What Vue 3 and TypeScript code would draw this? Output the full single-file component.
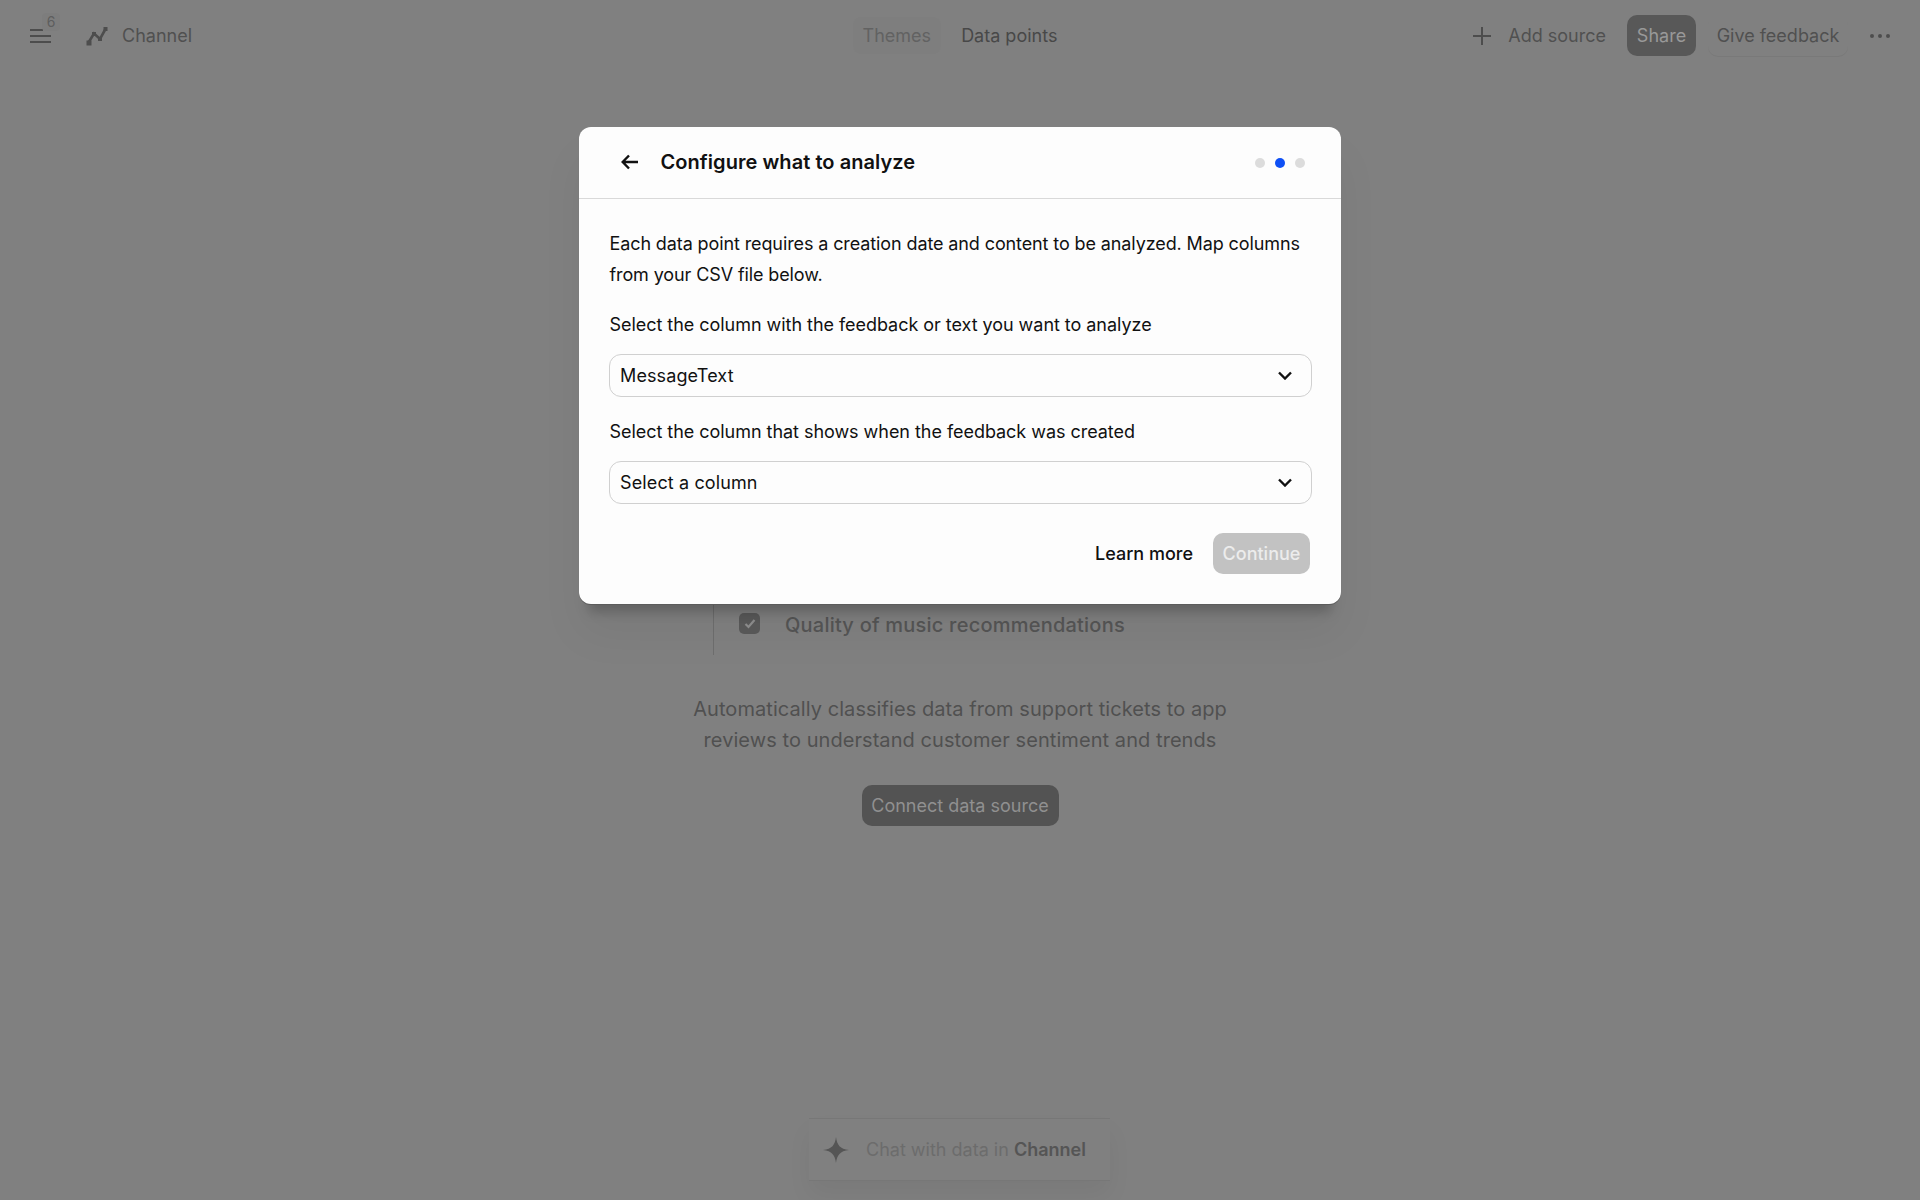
<script setup lang="ts">
const dots: string[] = ['idle', 'active', 'idle']
</script>

<template>
  <div class="page">
    <header class="topbar">
      <div class="left">
        <button class="menu">
          <svg width="21" height="16" viewBox="0 0 21 16" fill="none" stroke="#4d4d4d" stroke-width="2">
            <path d="M0 2h13M0 8h21M0 14h21" />
          </svg>
          <span class="badge">6</span>
        </button>
        <span class="channel-icon">
          <svg width="22" height="22" viewBox="0 0 22 22" fill="none" stroke="#4d4d4d" stroke-width="2.600">
            <path d="M2.500 17.500 L8 8.500 L14 14 L19.500 4" />
            <rect x="0.500" y="15.500" width="5" height="5" fill="#4d4d4d" stroke="none" />
            <rect x="6" y="7" width="4" height="4" fill="#4d4d4d" stroke="none" />
            <rect x="12" y="12" width="4" height="4" fill="#4d4d4d" stroke="none" />
            <rect x="17.500" y="2" width="4" height="4" fill="#4d4d4d" stroke="none" />
          </svg>
        </span>
        <span class="channel-name">Channel</span>
      </div>
      <nav class="tabs">
        <span class="tab current">Themes</span>
        <span class="tab">Data points</span>
      </nav>
      <div class="right">
        <span class="add">
          <svg width="18" height="18" viewBox="0 0 18 18" fill="none" stroke="#4d4d4d" stroke-width="2">
            <path d="M9 0v18M0 9h18" />
          </svg>
          Add source
        </span>
        <button class="share">Share</button>
        <button class="feedback">Give feedback</button>
        <svg class="more" width="20" height="4" viewBox="0 0 20 4" fill="#4d4d4d">
          <circle cx="2" cy="2" r="2" /><circle cx="10" cy="2" r="2" /><circle cx="18" cy="2" r="2" />
        </svg>
      </div>
    </header>

    <main class="hero">
      <div class="preview">
        <div class="row">
          <span class="check">
            <svg width="12" height="10" viewBox="0 0 12 10" fill="none" stroke="#8f8f8f" stroke-width="2.200">
              <path d="M1.500 5l3 3 6-7" />
            </svg>
          </span>
          <span class="row-text">Quality of music recommendations</span>
        </div>
      </div>
      <p class="desc">Automatically classifies data from support tickets to app<br />reviews to understand customer sentiment and trends</p>
      <button class="connect">Connect data source</button>
    </main>

    <div class="chat">
      <svg width="26" height="26" viewBox="0 0 26 26" fill="#555">
        <path d="M13 0 C14 8 17 12 26 13 C17 14 14 18 13 26 C12 18 9 14 0 13 C9 12 12 8 13 0Z" />
      </svg>
      <span class="chat-text">Chat with data in <b>Channel</b></span>
    </div>

    <div class="overlay">
      <section class="modal">
        <div class="modal-head">
          <svg class="back" width="18" height="16" viewBox="0 0 18 16" fill="none" stroke="#111" stroke-width="2.400">
            <path d="M17 8H2M8 1.500 1.700 8 8 14.500" />
          </svg>
          <h2 class="title">Configure what to analyze</h2>
          <div class="steps">
            <i v-for="(d, i) in dots" :key="i" class="step" :class="d"></i>
          </div>
        </div>
        <div class="modal-body">
          <p class="intro">Each data point requires a creation date and content to be analyzed. Map columns from your CSV file below.</p>
          <label class="label">Select the column with the feedback or text you want to analyze</label>
          <div class="select">
            <span>MessageText</span>
            <svg width="14" height="9" viewBox="0 0 14 9" fill="none" stroke="#111" stroke-width="2.400">
              <path d="M1 1.500l6 6 6-6" />
            </svg>
          </div>
          <label class="label">Select the column that shows when the feedback was created</label>
          <div class="select">
            <span>Select a column</span>
            <svg width="14" height="9" viewBox="0 0 14 9" fill="none" stroke="#111" stroke-width="2.400">
              <path d="M1 1.500l6 6 6-6" />
            </svg>
          </div>
          <div class="actions">
            <button class="learn">Learn more</button>
            <button class="continue">Continue</button>
          </div>
        </div>
      </section>
    </div>
  </div>
</template>

<style>
html, body { margin: 0; background: #808080; }
</style>

<style scoped>
.page {
  position: relative;
  height: 1200px;
  overflow: hidden;
  background: #808080;
  font-family: Inter, "Liberation Sans", sans-serif;
  font-size: 18px;
  color: #4d4d4d;
  display: flex;
  flex-direction: column;
}
button { font: inherit; border: 0; background: none; padding: 0; color: inherit; }

.topbar {
  height: 71px;
  display: grid;
  grid-template-columns: 1fr auto 1fr;
  align-items: center;
  padding: 0 30px;
}
.left, .right, .tabs { display: flex; align-items: center; }
.menu { position: relative; display: flex; width: 21px; height: 16px; margin-right: 35px; }
.badge {
  position: absolute;
  left: 12px;
  top: -15px;
  width: 18px;
  height: 18px;
  border-radius: 4px;
  background: #7d7d7d;
  color: #5e5e5e;
  font-size: 14px;
  line-height: 18px;
  text-align: center;
}
.channel-icon { display: flex; margin-right: 14px; }
.channel-name { color: #505050; }

.tabs { gap: 10px; }
.tab { padding: 8px 10px; border-radius: 8px; color: #484848; }
.tab.current { background: #7e7e7e; color: #626262; }

.right { justify-content: flex-end; }
.add { display: flex; align-items: center; gap: 17px; color: #505050; margin-right: 21px; }
.share {
  width: 69px;
  height: 41px;
  border-radius: 10px;
  background: #585858;
  color: #999;
  margin-right: 12px;
}
.feedback {
  width: 140px;
  height: 41px;
  border-radius: 10px;
  color: #505050;
  box-shadow: 0 1px 0 #797979;
  margin-right: 22px;
}

.hero { display: flex; flex-direction: column; align-items: center; }
.preview {
  width: 760px;
  height: 584px;
  display: flex;
  align-items: flex-end;
  padding-left: 133px;
  box-sizing: border-box;
}
.row {
  width: 520px;
  height: 52px;
  display: flex;
  align-items: flex-start;
  border-left: 1px solid #6e6e6e;
  box-sizing: border-box;
  padding-left: 25px;
  padding-top: 10px;
  gap: 25px;
}
.check {
  width: 21px;
  height: 21px;
  border-radius: 5px;
  background: #5a5a5a;
  display: flex;
  align-items: center;
  justify-content: center;
  flex: none;
}
.row-text { font-size: 20px; font-weight: 500; line-height: 24px; letter-spacing: .22px; color: #555; }
.desc {
  margin: 39px 0 0;
  font-size: 20px;
  line-height: 31px;
  letter-spacing: .065px;
  text-align: center;
  color: #505050;
}
.connect {
  margin-top: 29px;
  width: 197px;
  height: 41px;
  border-radius: 10px;
  background: #535353;
  color: #909090;
}

.chat {
  position: absolute;
  left: 809px;
  top: 1118px;
  width: 301px;
  height: 63px;
  box-sizing: border-box;
  border-top: 1px solid #777;
  border-bottom: 1px solid #777;
  padding-left: 14px;
  display: flex;
  align-items: center;
  gap: 17px;
  box-shadow: 0 14px 24px rgba(0, 0, 0, .05);
}
.chat-text { color: #6c6c6c; }
.chat-text b { font-weight: 600; color: #555; }

.overlay {
  position: absolute;
  inset: 0;
  display: flex;
  justify-content: center;
  align-items: flex-start;
  padding-top: 127px;
}
.modal {
  width: 762px;
  height: 477px;
  background: #fdfdfd;
  border-radius: 12px;
  box-shadow:
    0 1px 0 #5c5c5c,
    0 18px 12px -10px rgba(0, 0, 0, .2),
    0 30px 44px rgba(0, 0, 0, .05);
  color: #111;
}
.modal-head {
  height: 71px;
  display: flex;
  align-items: center;
  border-bottom: 1px solid #d9d9d9;
  padding: 0 36px 0 42px;
}
.back { flex: none; margin-right: 21.500px; position: relative; top: -.5px; }
.title { margin: 0; font-size: 20px; font-weight: 600; flex: 1; color: #111; letter-spacing: .06px; position: relative; top: -.5px; }
.steps { display: flex; gap: 10px; }
.step { width: 10px; height: 10px; border-radius: 50%; background: #dcdcdc; display: block; }
.step.active { background: #0f50f5; }

.modal-body { padding: 29px 31px 0 30.500px; }
.intro { margin: 0; line-height: 31px; letter-spacing: -.11px; }
.label { display: block; margin-top: 19px; line-height: 31px; letter-spacing: -.04px; }
.select {
  margin-top: 14px;
  margin-left: -1px;
  width: 703px;
  height: 43px;
  box-sizing: border-box;
  border: 1px solid #d0d0d0;
  border-radius: 12px;
  background: #fdfdfd;
  padding: 0 19px 0 10.500px;
  display: flex;
  align-items: center;
  justify-content: space-between;
  letter-spacing: .12px;
}
.actions { display: flex; justify-content: flex-end; align-items: center; margin-top: 29px; gap: 20px; }
.learn { font-weight: 500; color: #111; }
.continue {
  width: 97px;
  height: 41px;
  border-radius: 10px;
  background: #c2c2c2;
  color: #ececec;
  font-weight: 500;
}
</style>
